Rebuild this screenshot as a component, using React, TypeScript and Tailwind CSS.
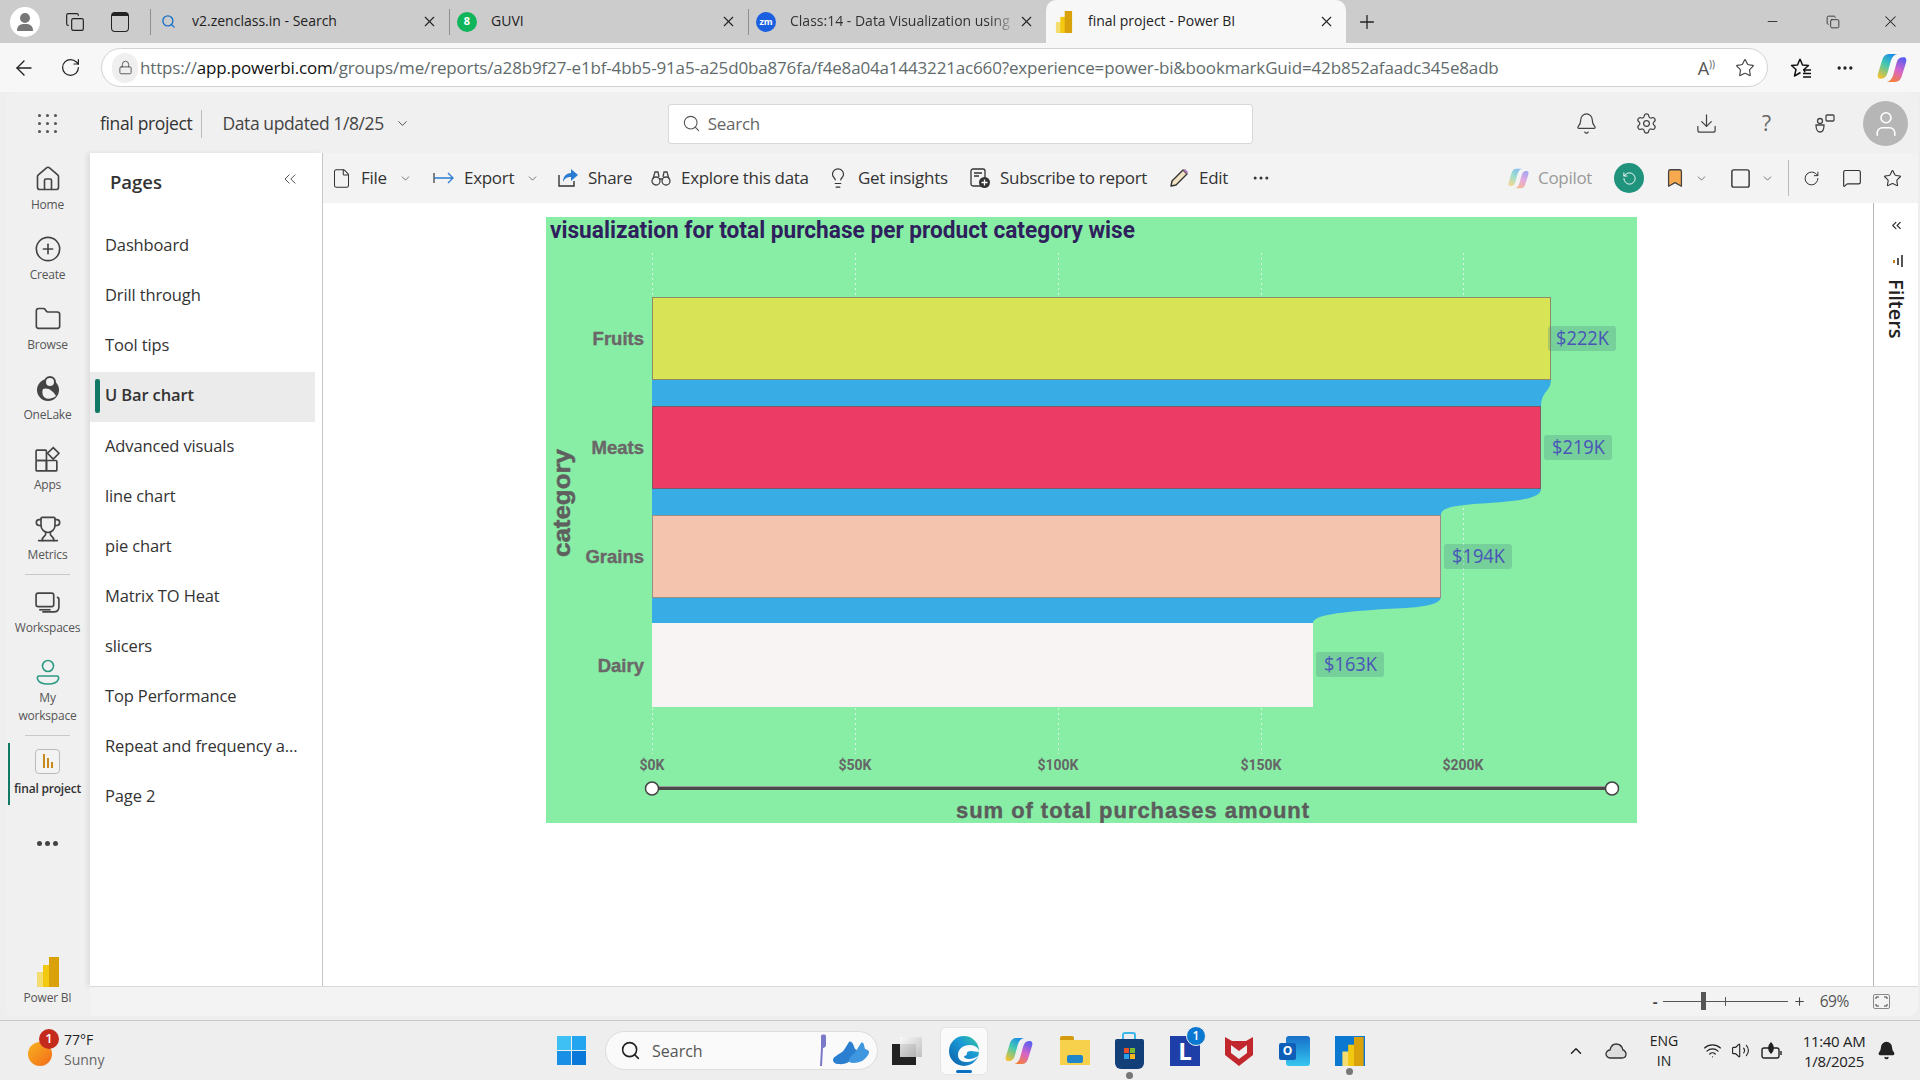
import React from "react";
import {
  ArrowLeft, RotateCw, Lock, Star, MoreHorizontal, X, Plus, Minus, Search, ChevronDown, Bell, Settings, Download,
  File as FileIcon, Lightbulb, ChevronsLeft, ChevronUp, Wifi, Volume2, Copy, Square, MessageSquare, House, CirclePlus, Folder, Trophy, User, RotateCcw, Bookmark,
} from "lucide-react";

const sans = "font-['Open_Sans','Noto_Sans',sans-serif]";

const BiLogo = ({ w = 22, h = 30 }: { w?: number; h?: number }) => (
  <svg width={w} height={h} viewBox="0 0 22 30">
    <rect x="0" y="15" width="10" height="15" fill="#f5dc6e" />
    <rect x="6" y="8" width="10" height="22" fill="#f2c811" />
    <rect x="12" y="0" width="10" height="30" fill="#d9a20b" />
  </svg>
);

const Gemish = ({ s = 28 }: { s?: number }) => (
  <svg width={s} height={s} viewBox="0 0 28 28">
    <defs>
      <linearGradient id="cpa" x1="0.7" y1="0" x2="0.2" y2="1"><stop offset="0" stopColor="#1b8fe8" /><stop offset=".45" stopColor="#45c8b0" /><stop offset="1" stopColor="#f2c230" /></linearGradient>
      <linearGradient id="cpb" x1="0.7" y1="0" x2="0.3" y2="1"><stop offset="0" stopColor="#5b5ef0" /><stop offset=".5" stopColor="#d664c8" /><stop offset="1" stopColor="#f5803c" /></linearGradient>
    </defs>
    <path d="M11 1h8c-3 .5-5 3-6 6l-3 11c-1 4-3 6-6 6h-1c-2 0-3-2-2-5l4-13c1-3 3-5 6-5z" fill="url(#cpa)" />
    <path d="M17 27h-8c3-.5 5-3 6-6l3-11c1-4 3-6 6-6h1c2 0 3 2 2 5l-4 13c-1 3-3 5-6 5z" fill="url(#cpb)" />
  </svg>
);

function Tab({ icon, title, w, active, muted }: { icon: React.ReactNode; title: string; w: number; active?: boolean; muted?: boolean }) {
  return (
    <div style={{ width: w }} className={"h-[43px] shrink-0 flex items-center pr-[11px] " + (active ? "bg-[#f7f7f7] rounded-t-[10px] pl-[7px]" : "")}>
      {!active && <div className="w-px h-[26px] bg-[#8f8f8f] mr-[6px] shrink-0" />}
      <div className="w-[22px] shrink-0 flex items-center justify-center">{icon}</div>
      <span className={"flex-1 overflow-hidden whitespace-nowrap text-[14px] ml-[13px] pb-[2px] " + (muted ? "text-[#333] [mask-image:linear-gradient(to_left,transparent,black_28px)]" : "text-[#222]")}>{title}</span>
      <X size={17} strokeWidth={1.5} className="text-[#222] shrink-0" />
    </div>
  );
}

function Nav({ icon, label, className = "" }: { icon: React.ReactNode; label: React.ReactNode; className?: string }) {
  return (
    <div className={"flex flex-col items-center pt-[5px] shrink-0 " + className}>
      <div className="w-[28px] h-[28px] flex items-center justify-center text-[#444]">{icon}</div>
      <div className="mt-[4px] text-[12px] leading-[16px] text-[#555] text-center whitespace-nowrap tracking-[-0.2px]">{label}</div>
    </div>
  );
}

function TB({ icon, label, w, chev, gray }: { icon: React.ReactNode; label: string; w: number; chev?: boolean; gray?: boolean }) {
  return (
    <div style={{ width: w }} className="shrink-0 flex items-center">
      <div className="w-[24px] flex items-center justify-center shrink-0">{icon}</div>
      <span className={"ml-[8px] text-[17px] tracking-[-0.3px] whitespace-nowrap " + (gray ? "text-[#9a9a9a]" : "text-[#333]")}>{label}</span>
      {chev && <ChevronDown size={13} strokeWidth={1.5} className="ml-[12px] text-[#555]" />}
    </div>
  );
}

const pages = ["Dashboard", "Drill through", "Tool tips", "U Bar chart", "Advanced visuals", "line chart", "pie chart", "Matrix TO Heat", "slicers", "Top Performance", "Repeat and frequency a...", "Page 2"];

function Chart() {
  const grid = [652, 855, 1058, 1261, 1463];
  const ticks = ["$0K", "$50K", "$100K", "$150K", "$200K"];
  const labels = [["Fruits", 339], ["Meats", 448], ["Grains", 557], ["Dairy", 666]] as const;
  const pills = [[1548, 326, "$222K"], [1544, 435, "$219K"], [1444, 544, "$194K"], [1316, 652, "$163K"]] as const;
  return (
    <svg width="1091" height="606" viewBox="546 217 1091 606" className="block">
      <rect x="546" y="217" width="1091" height="606" fill="#88eea6" />
      <text x="550" y="238" textLength="585" lengthAdjust="spacingAndGlyphs" className="font-['Roboto',sans-serif] font-bold text-[23.500px] fill-[#2f1f5c]">visualization for total purchase per product category wise</text>
      {grid.map((x) => <line key={x} x1={x + 0.5} x2={x + 0.5} y1="253" y2="754" stroke="#d8f5e0" strokeWidth="1" strokeDasharray="2 3" />)}
      <path fill="#36a9e6" fillOpacity=".97" d="M652 379H1551C1551 392 1542 390 1541 406H652Z" />
      <path fill="#36a9e6" fillOpacity=".97" d="M652 489H1541C1541 499 1515 501 1490 503C1460 505 1441 506 1441 515H652Z" />
      <path fill="#36a9e6" fillOpacity=".97" d="M652 597H1441C1441 606 1415 608 1385 609C1340 612 1313 615 1313 623H652Z" />
      <rect x="652.500" y="297.500" width="898" height="82" fill="#d9e356" stroke="#8f8a66" />
      <rect x="652.500" y="406.500" width="888" height="82" fill="#ec3b65" stroke="#7d5a66" />
      <rect x="652.500" y="515.500" width="788" height="82" fill="#f4c4ae" stroke="#9a8c86" />
      <rect x="652" y="623" width="661" height="84" fill="#f7f4f3" />
      {labels.map(([t, y]) => <text key={t} x="644" y={y + 6} textAnchor="end" stroke="#6b6768" strokeWidth=".4" className="font-['Liberation_Sans',sans-serif] font-bold text-[18.500px] fill-[#6b6768]">{t}</text>)}
      <text transform="translate(570 503) rotate(-90)" textAnchor="middle" textLength="108" lengthAdjust="spacingAndGlyphs" stroke="#5f5f5f" strokeWidth=".5" className="font-['Liberation_Sans',sans-serif] font-bold text-[24px] fill-[#5f5f5f]">category</text>
      {pills.map(([x, y, t]) => (
        <g key={t}>
          <rect x={x} y={y} width="68" height="25" rx="3" fill="#4a8a7a" fillOpacity=".3" />
          <text x={x + 8} y={y + 19} textLength="53" lengthAdjust="spacingAndGlyphs" className="font-['Open_Sans',sans-serif] text-[20px] fill-[#4a55b8]">{t}</text>
        </g>
      ))}
      {ticks.map((t, i) => <text key={t} x={grid[i]} y="770" textAnchor="middle" className="font-['Roboto',sans-serif] font-bold text-[14px] fill-[#666]">{t}</text>)}
      <rect x="652" y="786" width="960" height="1" fill="#9a9a9a" />
      <rect x="652" y="787" width="960" height="3" fill="#4a4a4a" />
      <circle cx="652" cy="788.500" r="6.500" fill="#fff" stroke="#444" strokeWidth="1.500" />
      <circle cx="1612" cy="788.500" r="6.500" fill="#fff" stroke="#444" strokeWidth="1.500" />
      <text x="956" y="818" textLength="353" lengthAdjust="spacing" stroke="#5c5c5c" strokeWidth=".4" className="font-['Liberation_Sans',sans-serif] font-bold text-[22px] fill-[#5c5c5c]">sum of total purchases amount</text>
    </svg>
  );
}

const tray = "text-[#222]";

export default function App() {
  return (
    <div className={"w-[1920px] h-[1080px] overflow-hidden flex flex-col bg-[#eeeeee] " + sans}>
      {/* tab strip */}
      <div className="h-[43px] shrink-0 bg-[#cccccc] flex items-center">
        <div className="w-[150px] shrink-0 flex items-center">
          <div className="ml-[10px] w-[30px] h-[30px] rounded-full bg-white flex flex-col items-center justify-center">
            <div className="w-[10px] h-[10px] rounded-full bg-[#777]" />
            <div className="w-[16px] h-[7px] rounded-t-[6px] bg-[#777] mt-[1px]" />
          </div>
          <Copy size={20} strokeWidth={1.4} className="ml-[25px] text-[#222]" />
          <div className="ml-[26px] w-[18px] h-[20px] rounded-[4px] border-[1.500px] border-[#222] border-t-[4px]" />
        </div>
        <Tab w={299} title="v2.zenclass.in - Search" icon={<Search size={15} strokeWidth={2.2} className="text-[#1a73c8]" />} />
        <Tab w={299} title="GUVI" icon={<div className="w-[20px] h-[20px] rounded-full bg-[#10b45a] text-white text-[11px] font-bold flex items-center justify-center">8</div>} />
        <Tab w={298} muted title="Class:14 - Data Visualization using" icon={<div className="w-[20px] h-[20px] rounded-full bg-[#1a5fe0] text-white text-[9px] font-bold flex items-center justify-center">zm</div>} />
        <Tab w={300} active title="final project - Power BI" icon={<BiLogo w={18} h={22} />} />
        <Plus size={22} strokeWidth={1.4} className="ml-[10px] text-[#222]" />
        <div className="flex-1" />
        <Minus size={15} strokeWidth={1.4} className="text-[#222]" />
        <Copy size={14} strokeWidth={1.4} className="ml-[46px] text-[#222]" />
        <X size={19} strokeWidth={1.3} className="ml-[41px] mr-[20px] text-[#222]" />
      </div>

      {/* address bar */}
      <div className="h-[49px] shrink-0 bg-[#f7f7f7] flex items-center">
        <ArrowLeft size={24} strokeWidth={1.4} className="ml-[12px] text-[#222]" />
        <RotateCw size={21} strokeWidth={1.4} className="ml-[24px] text-[#222]" />
        <div className="ml-[20px] w-[1667px] h-[39px] rounded-full bg-white border border-[#d2d2d2] flex items-center pl-[10px]">
          <div className="w-[26px] h-[30px] rounded-full bg-[#efefef] flex items-center justify-center"><Lock size={15} strokeWidth={1.5} className="text-[#555]" /></div>
          <span className="ml-[2px] text-[17px] tracking-[-0.16px] whitespace-nowrap text-[#5f6b6b]">https://<span className="text-[#111]">app.powerbi.com</span>/groups/me/reports/a28b9f27-e1bf-4bb5-91a5-a25d0ba876fa/f4e8a04a1443221ac660?experience=power-bi&amp;bookmarkGuid=42b852afaadc345e8adb</span>
          <div className="flex-1" />
          <span className="text-[18px] text-[#555] leading-none">A<span className="text-[10px] align-top">))</span></span>
          <Star size={20} strokeWidth={1.4} className="ml-[20px] mr-[12px] text-[#444]" />
        </div>
        <svg width="24" height="24" viewBox="0 0 24 24" fill="none" stroke="#111" strokeWidth="1.500" strokeLinejoin="round" className="ml-[21px]"><path d="M11 3l2.500 6 6 .5-4.500 4 1 3" /><path d="M11 3L8.500 9l-6 .5 4.500 4-1.500 6.500 6-3.500" /><path d="M14 14h8M14 17.500h8M14 21h8" /></svg>
        <MoreHorizontal size={20} strokeWidth={2} className="ml-[22px] text-[#222]" />
        <div className="ml-[22px]"><Gemish s={30} /></div>
      </div>

      {/* app */}
      <div className="h-[924px] shrink-0 ml-[5px] mr-[2px] flex flex-col bg-[#f0f0f0] rounded-[10px] overflow-hidden">
        <div className="h-[61px] shrink-0 flex items-center pt-[2px]">
          <div className="ml-[33px] w-[19px] grid grid-cols-3 gap-[5px]">
            {Array.from({ length: 9 }).map((_, i) => <div key={i} className="w-[3px] h-[3px] rounded-full bg-[#555]" />)}
          </div>
          <span className="ml-[43px] text-[17.500px] tracking-[-0.35px] text-[#333]">final project</span>
          <div className="ml-[9px] w-px h-[28px] bg-[#bbb]" />
          <span className="ml-[20px] text-[17.500px] tracking-[-0.4px] text-[#444]">Data updated 1/8/25</span>
          <ChevronDown size={15} strokeWidth={1.5} className="ml-[11px] text-[#444]" />
          <div className="ml-[258px] w-[585px] h-[40px] bg-white border border-[#d8d8d8] rounded-[3px] flex items-center pl-[13px]">
            <Search size={19} strokeWidth={1.4} className="text-[#555]" />
            <span className="ml-[7px] text-[17px] text-[#666] tracking-[-0.3px]">Search</span>
          </div>
          <div className="flex-1" />
          <Bell size={23} strokeWidth={1.3} className="text-[#444]" />
          <Settings size={23} strokeWidth={1.3} className="ml-[37px] text-[#444]" />
          <Download size={23} strokeWidth={1.3} className="ml-[37px] text-[#444]" />
          <span className="ml-[44px] text-[21px] text-[#666]">?</span>
          <svg width="22" height="22" viewBox="0 0 22 22" fill="none" stroke="#444" strokeWidth="1.300" className="ml-[43px]"><rect x="12" y="2" width="8" height="6" rx="1" /><circle cx="6" cy="8" r="2.500" /><path d="M2 12h8c0 5-2 7-4 7s-4-2-4-7z" /></svg>
          <div className="ml-[27px] mr-[10px] w-[45px] h-[45px] rounded-full bg-[#b6b6b6] flex items-center justify-center"><User size={30} strokeWidth={1.3} className="text-white" /></div>
        </div>

        <div className="flex-1 min-h-0 flex">
          {/* left nav */}
          <div className="w-[85px] shrink-0 flex flex-col pt-[7px]">
            <Nav className="h-[70px]" icon={<House size={28} strokeWidth={1.4} />} label="Home" />
            <Nav className="h-[70px]" icon={<CirclePlus size={28} strokeWidth={1.4} />} label="Create" />
            <Nav className="h-[70px]" icon={<Folder size={28} strokeWidth={1.4} />} label="Browse" />
            <Nav className="h-[70px]" icon={
              <svg width="26" height="26" viewBox="0 0 26 26"><circle cx="13" cy="14" r="11" fill="#444" /><circle cx="15" cy="6" r="5" fill="#f0f0f0" stroke="#444" strokeWidth="2" /><path d="M8 13c5-2 10 2 13 7-4 3-9 4-12 1-2-2-2-6-1-8z" fill="#f0f0f0" /></svg>
            } label="OneLake" />
            <Nav className="h-[70px]" icon={
              <svg width="27" height="27" viewBox="0 0 26 26" fill="none" stroke="#444" strokeWidth="1.600"><rect x="2" y="4" width="10" height="10" rx="1" /><rect x="2" y="14" width="10" height="10" rx="1" /><rect x="12" y="14" width="10" height="10" rx="1" /><path d="M18.500 1.500l5.500 5.500-5.500 5.500-5.500-5.500z" /></svg>
            } label="Apps" />
            <Nav className="h-[64px]" icon={<Trophy size={28} strokeWidth={1.4} />} label="Metrics" />
            <div className="mx-[20px] h-px bg-[#c9c9c9] shrink-0" />
            <Nav className="h-[57px] mt-[8px]" icon={
              <svg width="27" height="27" viewBox="0 0 26 26" fill="none" stroke="#444" strokeWidth="1.600"><rect x="2" y="4" width="17" height="13" rx="2" /><path d="M22 8c1 0 2 1 2 2v7c0 3-2 5-5 5H8" /><path d="M5 20h11" /></svg>
            } label="Workspaces" />
            <div className="flex flex-col items-center pt-[5px] mt-[13px] shrink-0 h-[72px]">
              <svg width="28" height="28" viewBox="0 0 28 28" fill="none" stroke="#2c9b84" strokeWidth="1.600"><circle cx="14" cy="8" r="5.500" /><path d="M5 18h18c1 0 2 1 1.500 3-1 3-5 5-10.500 5S4.500 24 3.500 21C3 19 4 18 5 18z" /></svg>
              <div className="mt-[3px] text-[12px] leading-[18px] text-[#555] text-center tracking-[-0.2px]">My<br />workspace</div>
            </div>
            <div className="mt-[10px] mx-[20px] h-px bg-[#c9c9c9] shrink-0" />
            <div className="relative mt-[7px] h-[62px] shrink-0 flex flex-col items-center pt-[6px]">
              <div className="absolute left-[3px] top-0 w-[2px] h-[62px] bg-[#117865]" />
              <div className="w-[25px] h-[25px] rounded-[4px] border border-[#bbb] bg-[#f3f3f3] flex items-end justify-center gap-[2px] pb-[5px]">
                <div className="w-[2px] h-[14px] bg-[#c98a1a]" /><div className="w-[2px] h-[10px] bg-[#c98a1a]" /><div className="w-[2px] h-[6px] bg-[#c98a1a]" />
              </div>
              <div className="mt-[7px] text-[12px] leading-[16px] font-semibold text-[#333] whitespace-nowrap tracking-[-0.2px]">final project</div>
            </div>
            <div className="mt-[36px] flex justify-center gap-[3px] shrink-0">
              <div className="w-[5px] h-[5px] rounded-full bg-[#444]" /><div className="w-[5px] h-[5px] rounded-full bg-[#444]" /><div className="w-[5px] h-[5px] rounded-full bg-[#444]" />
            </div>
            <div className="mt-auto pb-[10px] flex flex-col items-center">
              <BiLogo />
              <div className="mt-[3px] text-[12px] leading-[16px] text-[#555] tracking-[-0.2px]">Power BI</div>
            </div>
          </div>

          {/* main */}
          <div className="flex-1 min-w-0 flex flex-col">
            <div className="flex-1 min-h-0 flex">
              {/* pages */}
              <div className="w-[233px] shrink-0 bg-white border-r border-[#c8c8c8] shadow-[-3px_0_5px_rgba(0,0,0,0.08)]">
                <div className="h-[58px] flex items-center pl-[20px] pr-[22px] justify-between">
                  <span className="text-[18.500px] font-semibold text-[#333]">Pages</span>
                  <ChevronsLeft size={20} strokeWidth={1.2} className="text-[#555] -mt-[6px]" />
                </div>
                <div className="pt-[11px] pr-[7px]">
                  {pages.map((p) => {
                    const on = p === "U Bar chart";
                    return (
                      <div key={p} className={"relative h-[50.100px] flex items-center pl-[15px] pb-[3px] text-[16.500px] tracking-[-0.13px] whitespace-nowrap " + (on ? "bg-[#ebebeb] font-semibold text-[#333]" : "text-[#333]")}>
                        {on && <div className="absolute left-[5px] top-[7px] w-[5px] h-[34px] rounded-[2px] bg-[#117865]" />}
                        {p}
                      </div>
                    );
                  })}
                </div>
              </div>
              <div className="flex-1 min-w-0 flex flex-col bg-white">
                {/* toolbar */}
                <div className="h-[50px] shrink-0 bg-[#f3f3f3] flex items-center pl-[6px]">
                  <TB w={103} icon={<FileIcon size={21} strokeWidth={1.2} className="text-[#333]" />} label="File" chev />
                  <TB w={124} icon={<svg width="22" height="14" viewBox="0 0 22 14" fill="none" strokeWidth="1.300"><path d="M1 2v10" stroke="#444" /><path d="M1 7h19M15 2l5 5-5 5" stroke="#2b7cd3" /></svg>} label="Export" chev />
                  <TB w={93} icon={<svg width="22" height="22" viewBox="0 0 22 22" fill="none"><path d="M2 8v11h15v-5" stroke="#333" strokeWidth="1.400" /><path d="M6 15c0-6 4-9 8-9V2l7 6-7 6v-4c-4 0-6 1-8 5z" fill="#2b7cd3" /></svg>} label="Share" />
                  <TB w={177} icon={<svg width="20" height="18" viewBox="0 0 20 18" fill="none" stroke="#444" strokeWidth="1.300"><circle cx="5" cy="12" r="4" /><circle cx="15" cy="12" r="4" /><path d="M2 10l2-7h3l1 5M18 10l-2-7h-3l-1 5M8 10h4" /></svg>} label="Explore this data" />
                  <TB w={142} icon={<Lightbulb size={22} strokeWidth={1.3} className="text-[#333]" />} label="Get insights" />
                  <TB w={199} icon={<svg width="22" height="22" viewBox="0 0 22 22" fill="none"><rect x="2" y="2" width="14" height="17" rx="2" stroke="#333" strokeWidth="1.300" /><path d="M5 6h8M5 9h5" stroke="#333" strokeWidth="1.300" /><circle cx="15.500" cy="15.500" r="5.500" fill="#333" /><path d="M15.500 12.500v6M12.500 15.500h6" stroke="#fff" strokeWidth="1.300" /></svg>} label="Subscribe to report" />
                  <TB w={84} icon={<svg width="22" height="22" viewBox="0 0 22 22" fill="none"><path d="M3 19l1-5L15 3l4 4L8 18z" fill="#f3e3c2" stroke="#333" strokeWidth="1.400" strokeLinejoin="round" /><path d="M15 3l4 4 1-2-3-3z" fill="#b07ab8" /></svg>} label="Edit" />
                  <MoreHorizontal size={20} strokeWidth={1.6} className="text-[#333]" />
                  <div className="w-[235px] shrink-0" />
                  <TB w={102} gray icon={<div className="opacity-50"><Gemish s={21} /></div>} label="Copilot" />
                  <div className="ml-[6px] w-[30px] h-[30px] rounded-full bg-[#1f937c] flex items-center justify-center"><RotateCcw size={15} strokeWidth={1.5} className="text-white" /></div>
                  <Bookmark size={22} strokeWidth={1.4} className="ml-[20px] text-[#444] fill-[#f6a94e]" />
                  <ChevronDown size={13} strokeWidth={1.5} className="ml-[9px] text-[#555]" />
                  <Square size={23} strokeWidth={1.5} className="ml-[21px] text-[#333]" />
                  <ChevronDown size={13} strokeWidth={1.5} className="ml-[9px] text-[#555]" />
                  <div className="ml-[14px] w-px h-[36px] bg-[#bbb]" />
                  <RotateCw size={17} strokeWidth={1.4} className="ml-[14px] text-[#333]" />
                  <MessageSquare size={20} strokeWidth={1.4} className="ml-[22px] text-[#333]" />
                  <Star size={19} strokeWidth={1.4} className="ml-[21px] text-[#333]" />
                </div>
                {/* canvas */}
                <div className="flex-1 min-h-0 flex">
                  <div className="flex-1 min-w-0 pl-[223px] pt-[14px]"><Chart /></div>
                  <div className="w-[45px] shrink-0 border-l border-[#b5b5b5] flex flex-col items-center pt-[15px]">
                    <ChevronsLeft size={15} strokeWidth={2} className="text-[#333]" />
                    <svg width="12" height="12" viewBox="0 0 12 12" className="mt-[22px] ml-[4px]" fill="#555"><rect x="1" y="5" width="2" height="3" fill="#c77a1a" /><rect x="5" y="3" width="2" height="7" /><rect x="9" y="0" width="2" height="12" /></svg>
                    <span className="mt-[12px] text-[20px] leading-none text-[#222] font-semibold [writing-mode:vertical-rl]">Filters</span>
                  </div>
                </div>
              </div>
            </div>
            {/* status */}
            <div className="h-[30px] shrink-0 bg-[#f3f3f3] border-t border-[#d8d8d8] flex items-center justify-end pr-[28px]">
              <span className="text-[15px] text-[#444] leading-none font-bold">-</span>
              <div className="relative ml-[5px] w-[125px] h-px bg-[#555]">
                <div className="absolute left-[38px] -top-[9px] w-[5px] h-[18px] bg-[#555]" />
                <div className="absolute left-[62px] -top-[4px] w-px h-[9px] bg-[#555]" />
              </div>
              <Plus size={13} strokeWidth={2} className="ml-[5px] text-[#444]" />
              <span className="ml-[14px] text-[15.500px] tracking-[-0.4px] text-[#555]">69%</span>
              <svg width="17" height="15" viewBox="0 0 17 15" fill="none" className="ml-[24px]"><rect x=".5" y=".5" width="16" height="14" rx="1.500" stroke="#888" /><path d="M3 5V3h3M11 3h3v2M14 10v2h-3M6 12H3v-2" stroke="#444" /></svg>
            </div>
          </div>
        </div>
      </div>

      <div className="h-[4px] shrink-0" />

      {/* taskbar */}
      <div className="h-[60px] shrink-0 bg-[#eeeeee] border-t border-[#c8c8c8] flex items-center">
        <div className="relative ml-[28px] w-[24px] h-[24px] mt-[6px] rounded-full bg-gradient-to-br from-[#f5b21f] to-[#f2681a] shrink-0">
          <div className="absolute left-[11px] -top-[13px] w-[20px] h-[20px] rounded-full bg-[#c42b1c] text-white text-[13px] font-semibold flex items-center justify-center">1</div>
        </div>
        <div className="ml-[12px] w-[60px] shrink-0 flex flex-col -mt-[2px]">
          <span className="text-[14px] leading-[20px] text-[#222]">77°F</span>
          <span className="text-[14px] leading-[20px] text-[#666]">Sunny</span>
        </div>
        <div className="ml-[433px] w-[29px] h-[29px] shrink-0 grid grid-cols-2 gap-[1.500px]">
          <div className="bg-[#3ec0f5]" /><div className="bg-[#23a6ef]" /><div className="bg-[#1a8fe6]" /><div className="bg-[#0a78d8]" />
        </div>
        <div className="ml-[19px] w-[273px] h-[39px] shrink-0 rounded-full bg-[#fafafa] border border-[#dcdcdc] flex items-center pl-[14px]">
          <Search size={21} strokeWidth={1.8} className="text-[#222]" />
          <span className="ml-[11px] text-[16px] text-[#555]">Search</span>
          <div className="flex-1" />
          <svg width="58" height="38" viewBox="0 0 58 38" className="mr-[4px]"><path d="M6 4c0-2 5-2 5 0v9c0 2-2 3-3 3l-1 18H5l1-18z" fill="#7a78c8" /><path d="M18 28c0-4 8-6 11-10l5-8c1-1 3 0 4 2l2 5c3 1 3 3 1 6-4 6-10 10-18 9-3 0-5-2-5-4z" fill="#2a7fd0" /><path d="M34 28c0-3 5-6 7-9l5-8c1-1 3 0 3 2l1 4c4 1 5 3 3 6-3 5-8 8-15 8-3 0-4-1-4-3z" fill="#3f97e0" /></svg>
        </div>
        <div className="ml-[14px] relative w-[30px] h-[28px] shrink-0">
          <div className="absolute left-0 bottom-0 w-[24px] h-[21px] bg-[#222]" />
          <div className="absolute right-0 top-0 w-[22px] h-[20px] bg-gradient-to-br from-[#fafafa] to-[#bbb] opacity-90" />
        </div>
        {/* edge */}
        <div className="ml-[18px] w-[48px] h-[48px] shrink-0 rounded-[6px] bg-[#fafafa] border border-[#e5e5e5] flex flex-col items-center justify-center relative">
          <svg width="32" height="32" viewBox="0 0 32 32"><defs><linearGradient id="edg" x1="0" y1="1" x2="1" y2="0"><stop offset="0" stopColor="#0b5ea8" /><stop offset=".6" stopColor="#1a9ad6" /><stop offset="1" stopColor="#35c99a" /></linearGradient></defs><circle cx="16" cy="16" r="15" fill="url(#edg)" /><path d="M31 17c0-4-4-7-9-7-7 0-12 4-12 10 0 4 3 7 8 7 5 0 10-2 12-6-3 2-6 3-9 3-3 0-5-1-5-3 2 0 3-1 3-3 0-1 1-2 4-2 3 0 6 1 8 1z" fill="#fafafa" /></svg>
          <div className="absolute bottom-[1px] w-[16px] h-[3px] rounded-full bg-[#0a6fc2]" />
        </div>
        <div className="ml-[17px] shrink-0"><Gemish s={28} /></div>
        {/* explorer */}
        <div className="ml-[27px] relative w-[30px] h-[29px] shrink-0">
          <div className="absolute top-0 left-0 w-[14px] h-[6px] bg-[#d49a10] rounded-t-[2px]" />
          <div className="absolute top-[4px] inset-x-0 bottom-0 bg-[#f7d04c]" />
          <div className="absolute bottom-[2px] left-[7px] w-[16px] h-[8px] bg-[#1f86c9] rounded-[2px]" />
        </div>
        {/* store */}
        <div className="ml-[24px] relative w-[30px] h-[38px] shrink-0 flex flex-col items-center">
          <div className="w-[14px] h-[7px] border-[2px] border-b-0 border-[#3db7e8] rounded-t-[3px]" />
          <div className="w-[29px] h-[30px] rounded-b-[6px] rounded-t-[2px] bg-[#123f78] flex items-center justify-center">
            <div className="grid grid-cols-2 gap-[1px]"><div className="w-[5px] h-[5px] bg-[#e8502a]" /><div className="w-[5px] h-[5px] bg-[#7dbb2e]" /><div className="w-[5px] h-[5px] bg-[#2a9fe8]" /><div className="w-[5px] h-[5px] bg-[#f5b91f]" /></div>
          </div>
          <div className="absolute -bottom-[9px] w-[7px] h-[7px] rounded-full bg-[#777]" />
        </div>
        {/* L */}
        <div className="ml-[26px] relative w-[30px] h-[30px] shrink-0 bg-[#1e3fa8] text-white text-[24px] font-bold flex items-center justify-center">L
          <div className="absolute -right-[6px] -top-[10px] w-[20px] h-[20px] rounded-full bg-[#0a78d0] border border-[#eee] text-[12px] font-semibold flex items-center justify-center">1</div>
        </div>
        {/* mcafee */}
        <svg width="28" height="30" viewBox="0 0 28 30" className="ml-[25px] shrink-0"><path d="M0 1l7 4h14l7-4v18l-14 11L0 19z" fill="#c1272d" /><path d="M6 9l8 6 8-6v8l-8 6-8-6z" fill="#eee" /></svg>
        {/* outlook */}
        <div className="ml-[26px] relative w-[31px] h-[30px] shrink-0">
          <div className="absolute right-0 top-0 w-[24px] h-[30px] rounded-[3px] bg-gradient-to-b from-[#1a6fc8] to-[#37c6f0]" />
          <div className="absolute left-0 top-[7px] w-[17px] h-[17px] rounded-[2px] bg-[#0f5fb8] text-white text-[12px] font-bold flex items-center justify-center">O</div>
        </div>
        {/* pbi */}
        <div className="ml-[25px] relative w-[30px] h-[30px] shrink-0 bg-[#0a78d0] flex items-end justify-end">
          <BiLogo w={24} h={29} />
          <div className="absolute -bottom-[9px] left-[11px] w-[7px] h-[7px] rounded-full bg-[#777]" />
        </div>
        <div className="flex-1" />
        <ChevronUp size={18} strokeWidth={2} className={tray} />
        <svg width="22" height="18" viewBox="0 0 22 18" className="ml-[20px]" fill="#ddd" stroke="#333" strokeWidth="1.300"><path d="M5 16h12c3 0 4-2 4-4s-2-4-3-4c-1-4-4-6-7-6S6 4 5 8c-2 0-4 2-4 4s2 4 4 4z" /></svg>
        <div className="ml-[19px] w-[36px] flex flex-col items-center text-[14px] leading-[20px] text-[#222]"><span>ENG</span><span>IN</span></div>
        <Wifi size={19} strokeWidth={1.5} className={"ml-[21px] " + tray} />
        <Volume2 size={19} strokeWidth={1.4} className={"ml-[9px] " + tray} />
        <svg width="22" height="18" viewBox="0 0 22 18" fill="none" stroke="#222" strokeWidth="1.400" className="ml-[11px]"><rect x="1" y="6" width="17" height="10" rx="2" /><path d="M20 9v4" /><path d="M10 1c-3 3-3 7 0 10 3-3 3-7 0-10z" fill="#222" /></svg>
        <div className="ml-[19px] w-[64px] flex flex-col items-center text-[15px] leading-[20px] text-[#222] whitespace-nowrap tracking-[-0.3px]"><span>11:40 AM</span><span>1/8/2025</span></div>
        <Bell size={19} strokeWidth={2} className="ml-[11px] mr-[24px] text-[#222] fill-[#222]" />
      </div>
    </div>
  );
}
